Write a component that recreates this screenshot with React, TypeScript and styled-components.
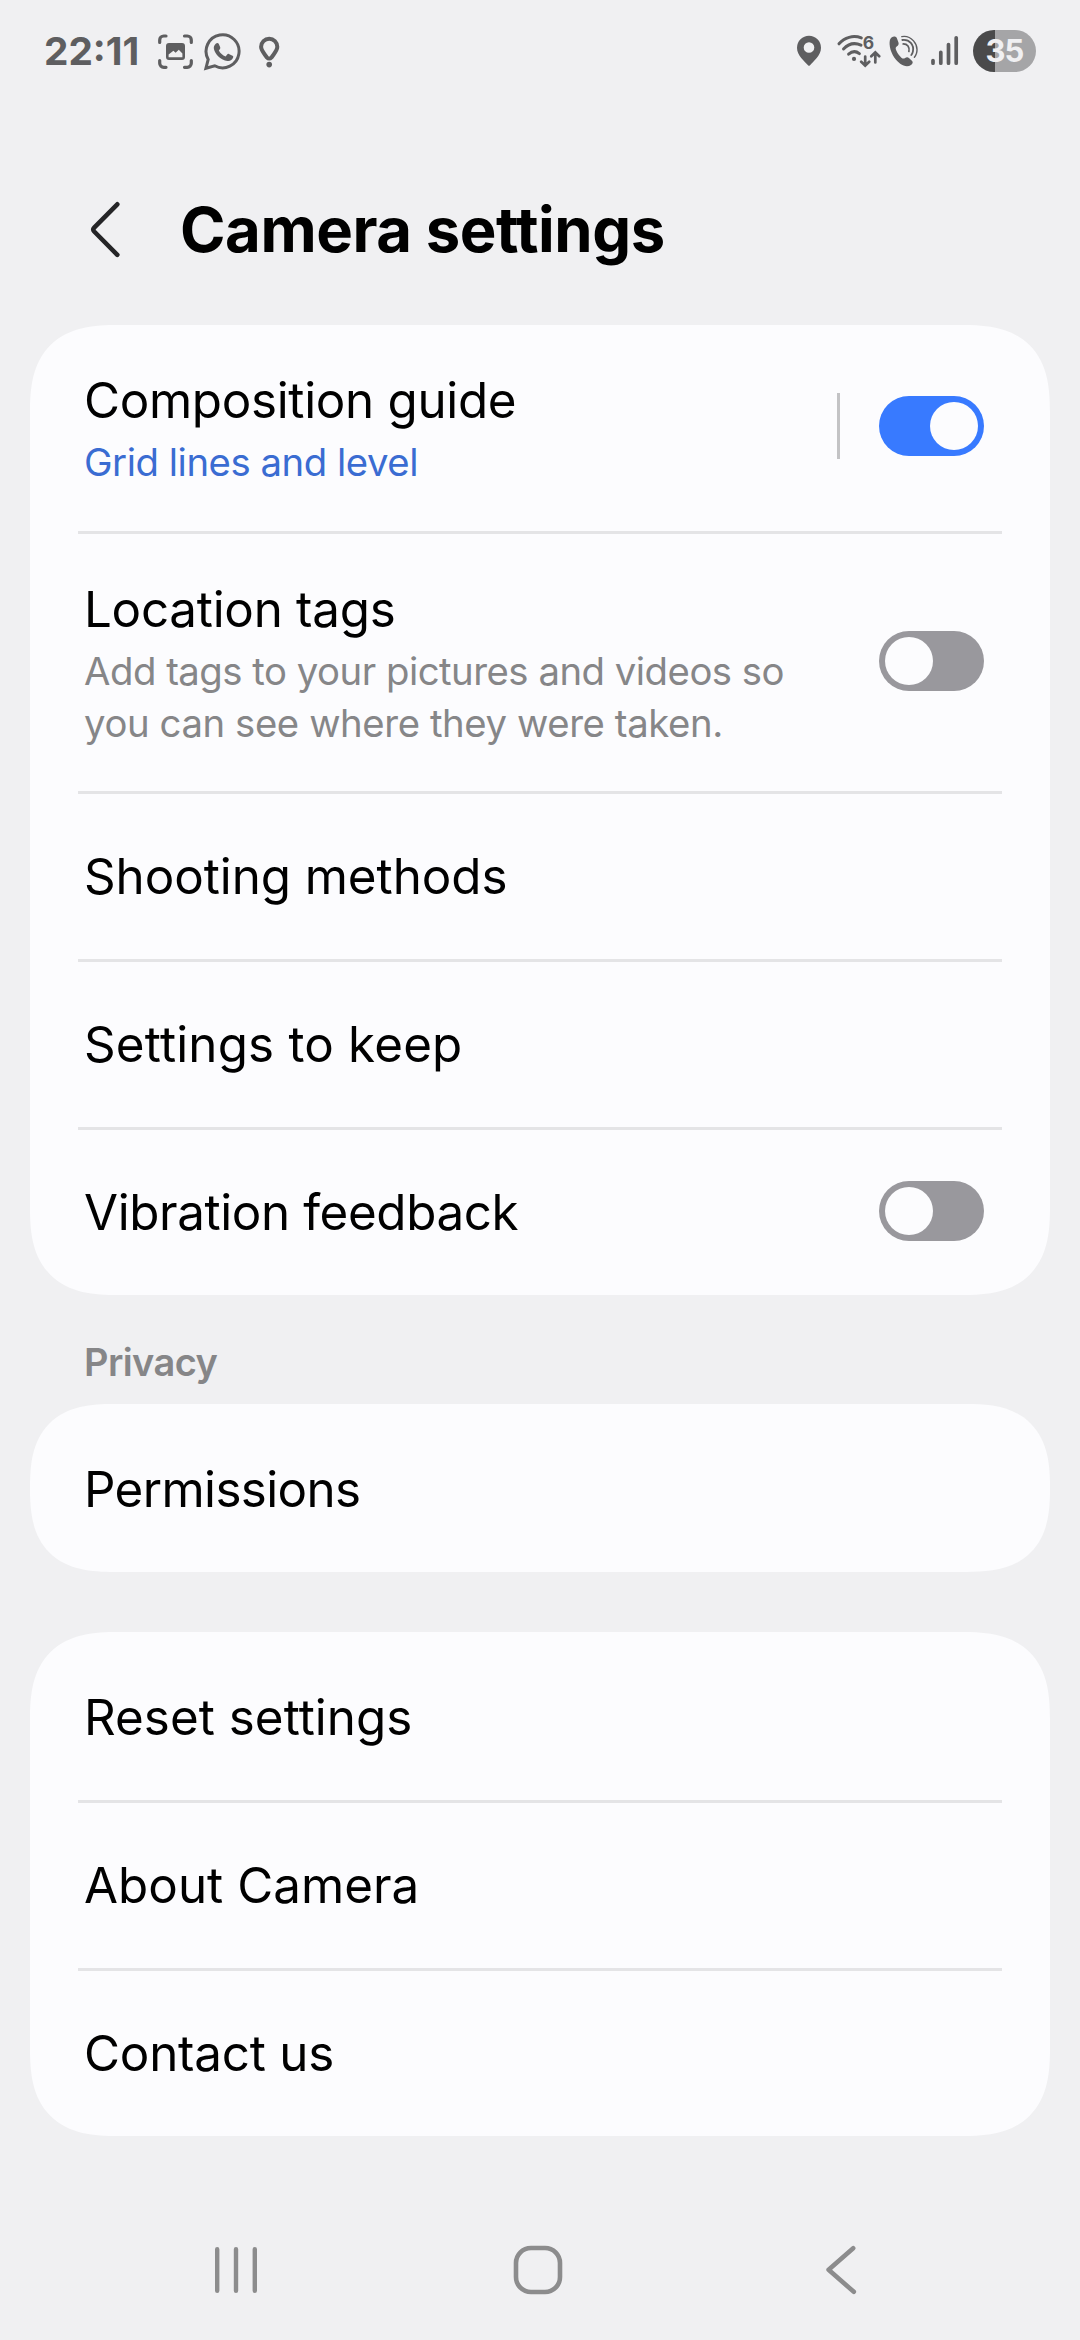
import React from 'react';
import styled, { createGlobalStyle } from 'styled-components';

const GlobalStyle = createGlobalStyle`
  * { box-sizing: border-box; }
  body { margin: 0; background: #f0f0f2; }
`;

const Screen = styled.div`
  width: 1080px;
  height: 2340px;
  display: flex;
  flex-direction: column;
  background: #f0f0f2;
  color: #000;
  font-family: Inter, Roboto, "Liberation Sans", sans-serif;
  white-space: nowrap;
  overflow: hidden;
`;

/* Status bar */
const StatusBar = styled.div`
  height: 104px;
  padding: 30px 44px 0;
  display: flex;
  justify-content: space-between;
  color: #5e5e60;
`;

const StatusGroup = styled.div`
  display: flex;
  height: 42px;
`;

const Clock = styled.div`
  width: 114px;
  font-size: 38.8px;
  font-weight: 700;
  line-height: 42px;
`;

const Glyph = styled.svg<{ $after?: number }>`
  display: block;
  flex: none;
  margin-right: ${(p) => p.$after ?? 0}px;
`;

const Battery = styled.div`
  width: 63px;
  height: 42px;
  border-radius: 21px;
  background: linear-gradient(to right, #4a4a4b 22px, #a5a5a7 22px);
  color: #f0f0f2;
  font-size: 31px;
  font-weight: 700;
  line-height: 42px;
  letter-spacing: -0.8px;
  text-align: center;
`;

/* Header */
const Header = styled.header`
  height: 221px;
  padding: 30px 0 0 90px;
  display: flex;
  align-items: center;
  gap: 59px;
`;

const PageTitle = styled.h1`
  margin: 0;
  font-size: 61.6px;
  font-weight: 700;
  line-height: 74px;
  letter-spacing: -0.44px;
`;

/* Cards */
const Content = styled.main`
  flex: 1;
  padding: 0 30px;
`;

const Card = styled.section<{ $top?: number }>`
  margin-top: ${(p) => p.$top ?? 0}px;
  background: #fcfcfe;
  border-radius: 72px;
  overflow: hidden;

  @supports (corner-shape: superellipse(1.4)) {
    border-radius: 88px;
    corner-shape: superellipse(1.4);
  }
`;

const Row = styled.div<{ $height?: number; $lift?: number }>`
  height: ${(p) => p.$height ?? 168}px;
  padding: 0 66px ${(p) => p.$lift ?? 0}px 54px;
  display: flex;
  align-items: center;
  justify-content: space-between;

  & + & {
    background: linear-gradient(#e4e4e6, #e4e4e6) 48px 0 / 924px 3px no-repeat;
  }
`;

const Texts = styled.div<{ $drop?: number }>`
  padding-top: ${(p) => p.$drop ?? 2}px;
  display: flex;
  flex-direction: column;
`;

const Label = styled.div<{ $track?: number }>`
  font-size: 49.3px;
  line-height: 60px;
  letter-spacing: ${(p) => p.$track ?? 0}px;
`;

const Summary = styled.div<{ $accent?: boolean }>`
  margin-top: 6px;
  font-size: 38.3px;
  line-height: 52px;
  letter-spacing: -0.46px;
  color: ${(p) => (p.$accent ? '#3a6cd2' : '#868688')};
`;

const SummaryLine = styled.span<{ $track: number }>`
  display: block;
  letter-spacing: ${(p) => p.$track}px;
`;

const SectionLabel = styled.h2`
  height: 109px;
  margin: 0;
  padding: 41px 0 0 54px;
  font-size: 38px;
  font-weight: 600;
  line-height: 52px;
  letter-spacing: -0.6px;
  color: #868688;
`;

const Controls = styled.div`
  display: flex;
  align-items: center;
  gap: 39px;
`;

const Separator = styled.div`
  width: 3px;
  height: 66px;
  background: #c3c3c5;
`;

const Track = styled.div<{ $on?: boolean }>`
  width: 105px;
  height: 60px;
  padding: 6px;
  border-radius: 30px;
  display: flex;
  justify-content: ${(p) => (p.$on ? 'flex-end' : 'flex-start')};
  background: ${(p) => (p.$on ? '#387aff' : '#99989d')};
`;

const Knob = styled.div`
  width: 48px;
  height: 48px;
  border-radius: 50%;
  background: #fcfcfe;
`;

/* Navigation bar */
const NavBar = styled.nav`
  height: 140px;
  padding-left: 213px;
  display: flex;
  align-items: center;
  color: #8c8c8d;
`;

const Toggle = ({ on }: { on?: boolean }) => (
  <Track $on={on} role="switch" aria-checked={!!on}>
    <Knob />
  </Track>
);

const ScreenshotIcon = () => (
  <Glyph $after={9} width="36" height="42" viewBox="158 30 36 42" fill="none">
    <path
      d="M159.7 42.500V40a4 4 0 0 1 4-4H166M184.500 36H187.300a4 4 0 0 1 4 4V42.500M191.300 60.500V63.300a4 4 0 0 1-4 4H184.500M166 67.300H163.700a4 4 0 0 1-4-4V60.500"
      stroke="currentColor" strokeWidth="3.200" strokeLinecap="round"
    />
    <path
      fillRule="evenodd" fill="currentColor"
      d="M169 43h13a3 3 0 0 1 3 3v11a3 3 0 0 1-3 3h-13a3 3 0 0 1-3-3V46a3 3 0 0 1 3-3ZM168.600 57.300h13.800V53.600L178.800 49.800 175.600 52.800 173.400 50.800 168.600 54.600Z"
    />
  </Glyph>
);

const WhatsAppIcon = () => (
  <Glyph $after={17} width="38" height="42" viewBox="203 30 38 42" fill="none">
    <path
      d="M205.900 68.300 208.200 59.400A16.500 16.500 0 1 1 214.700 65.800Z"
      stroke="currentColor" strokeWidth="3" strokeLinejoin="miter"
    />
    <path
      d="M216 43.500c1-.9 2.200-.8 2.700.3l1.500 3.500c.3.700.1 1.300-.4 1.900l-1 1.200c1.500 2.800 3.800 4.800 6.800 6l1.600-2c.5-.6 1-.7 1.700-.4l3.600 1.800c.8.4.9.9.6 1.800-.8 2.500-3.200 3.700-5.700 3.300-6.500-1-12.300-6.400-13.500-12-.4-2.200.4-3.900 2.100-5.400Z"
      fill="currentColor"
    />
  </Glyph>
);

const TipIcon = () => (
  <Glyph width="22" height="42" viewBox="258 30 22 42" fill="none">
    <path
      d="M269.200 38.700a8.100 8.100 0 0 1 8.100 8.100c0 3.800-3.300 6.900-5.700 10.500q-2.400 2.500-4.800 0c-2.400-3.600-5.700-6.700-5.700-10.500a8.100 8.100 0 0 1 8.100-8.100Z"
      stroke="currentColor" strokeWidth="4" strokeLinejoin="round"
    />
    <circle cx="269.200" cy="64.600" r="2.800" fill="currentColor" />
  </Glyph>
);

const PlaceIcon = () => (
  <Glyph $after={14} width="26" height="42" viewBox="796 30 26 42">
    <path
      fillRule="evenodd" fill="currentColor"
      d="M809 35.700a12 12 0 0 1 12 12c0 8-7.700 13.500-11 17.500q-1 1-2 0c-3.300-4-11-9.500-11-17.500a12 12 0 0 1 12-12ZM809 42.200a5.300 5.300 0 1 0 0 10.600a5.300 5.300 0 0 0 0-10.600Z"
    />
  </Glyph>
);

const SixText = styled.text`
  font: 700 17.500px Inter, Roboto, sans-serif;
`;

const WifiIcon = () => (
  <Glyph $after={8} width="45" height="42" viewBox="836 30 45 42" fill="none">
    <g stroke="currentColor" strokeWidth="3" strokeLinecap="round">
      <path d="M839 43.800C844.500 37.500 853 34.800 861.300 37.900" />
      <path d="M843.500 49C848.200 44 854.500 42.300 861 45.100" />
      <path d="M848.600 54.200C852.200 51 856 51 859.400 53.600" />
      <path d="M865.200 56.500V65M861.200 61.800 865.200 65.600 869.200 61.800M875.300 62.400V53M871.300 56.200 875.300 52.400 879.200 56.200" strokeWidth="2.700" />
    </g>
    <circle cx="854" cy="58.900" r="2.100" fill="currentColor" />
    <SixText x="862.800" y="49.300" fill="currentColor">6</SixText>
  </Glyph>
);

const CallIcon = () => (
  <Glyph $after={11} width="30" height="42" viewBox="889 30 30 42" fill="none">
    <path
      d="M891.500 37.600c2-1.600 4.300-1.600 5.300.4l1.600 4.200c.7 2-.1 3.100-1.700 4.300-1.300 1-1.300 2.100-.3 4.300 1.400 3 3.200 5.400 5 6.900 1.400 1.100 2.500 1.100 3.700.3 1.500-1.100 2.700-1.100 4.100.2l2.700 2.600c1.400 1.400 1 2.800-.9 4.200-3.200 2.100-7.100 1.300-10.800-1.300-6.100-4.400-10.200-12.300-10.600-19.400-.1-2.800.2-5.200 1.900-6.700Z"
      fill="currentColor"
    />
    <g stroke="currentColor" strokeLinecap="round">
      <path d="M901.800 36.600C911 35 919 44 916.500 53.300C916 55 915.300 56.100 914.400 57.200" strokeWidth="1.400" />
      <path d="M902.300 40C909.500 39 914.300 45 912.900 51.600C912.600 53 912.100 54 911.300 55" strokeWidth="1.800" />
      <path d="M903.200 43.900C907.500 43.900 909.800 47 908.900 51.500" strokeWidth="1.700" />
    </g>
  </Glyph>
);

const SignalIcon = () => (
  <Glyph $after={13} width="30" height="42" viewBox="930 30 30 42">
    <g stroke="currentColor" strokeWidth="3.700" strokeLinecap="round">
      <path d="M933 60.500V63.200M940.800 52.300V63.200M948.500 44.500V63.200M956.200 37.800V63.200" />
    </g>
  </Glyph>
);

const BackIcon = () => (
  <Glyph width="31" height="58" viewBox="90 200.500 31 58" fill="none">
    <path
      d="M117.300 203.800 94.200 227.200Q92.400 229.100 94.200 231L117.300 254.300"
      stroke="#252527" strokeWidth="4.600" strokeLinecap="round" strokeLinejoin="round"
    />
  </Glyph>
);

const RecentsIcon = () => (
  <Glyph $after={253} width="46" height="52" viewBox="213 2244 46 52" fill="none">
    <path
      d="M217.200 2249.300V2290.700M236 2249.300V2290.700M254.800 2249.300V2290.700"
      stroke="currentColor" strokeWidth="4.400" strokeLinecap="round"
    />
  </Glyph>
);

const HomeIcon = () => (
  <Glyph $after={260} width="52" height="52" viewBox="512 2244 52 52" fill="none">
    <rect x="516" y="2248" width="44" height="44" rx="15" stroke="currentColor" strokeWidth="4.600" />
  </Glyph>
);

const NavBackIcon = () => (
  <Glyph width="34" height="52" viewBox="824 2244 34 52" fill="none">
    <path
      d="M853.200 2248.300 828.600 2269.800 853.800 2291.800"
      stroke="currentColor" strokeWidth="4.600" strokeLinecap="round" strokeLinejoin="round"
    />
  </Glyph>
);

export default function App() {
  return (
    <Screen>
      <GlobalStyle />
      <StatusBar>
        <StatusGroup>
          <Clock>22:11</Clock>
          <ScreenshotIcon />
          <WhatsAppIcon />
          <TipIcon />
        </StatusGroup>
        <StatusGroup>
          <PlaceIcon />
          <WifiIcon />
          <CallIcon />
          <SignalIcon />
          <Battery>35</Battery>
        </StatusGroup>
      </StatusBar>

      <Header>
        <BackIcon />
        <PageTitle>Camera settings</PageTitle>
      </Header>

      <Content>
        <Card>
          <Row $height={206} $lift={4}>
            <Texts $drop={6}>
              <Label $track={-0.3}>Composition guide</Label>
              <Summary $accent>Grid lines and level</Summary>
            </Texts>
            <Controls>
              <Separator />
              <Toggle on />
            </Controls>
          </Row>
          <Row $height={260}>
            <Texts $drop={6}>
              <Label $track={-0.25}>Location tags</Label>
              <Summary>
                <SummaryLine $track={-0.49}>Add tags to your pictures and videos so</SummaryLine>
                <SummaryLine $track={-0.4}>you can see where they were taken.</SummaryLine>
              </Summary>
            </Texts>
            <Toggle />
          </Row>
          <Row>
            <Texts><Label $track={-0.05}>Shooting methods</Label></Texts>
          </Row>
          <Row>
            <Texts><Label $track={0.2}>Settings to keep</Label></Texts>
          </Row>
          <Row>
            <Texts><Label $track={-0.38}>Vibration feedback</Label></Texts>
            <Toggle />
          </Row>
        </Card>

        <SectionLabel>Privacy</SectionLabel>
        <Card>
          <Row>
            <Texts><Label $track={-0.6}>Permissions</Label></Texts>
          </Row>
        </Card>

        <Card $top={60}>
          <Row>
            <Texts><Label $track={0.05}>Reset settings</Label></Texts>
          </Row>
          <Row>
            <Texts><Label $track={0.05}>About Camera</Label></Texts>
          </Row>
          <Row>
            <Texts><Label $track={-0.2}>Contact us</Label></Texts>
          </Row>
        </Card>
      </Content>

      <NavBar>
        <RecentsIcon />
        <HomeIcon />
        <NavBackIcon />
      </NavBar>
    </Screen>
  );
}
